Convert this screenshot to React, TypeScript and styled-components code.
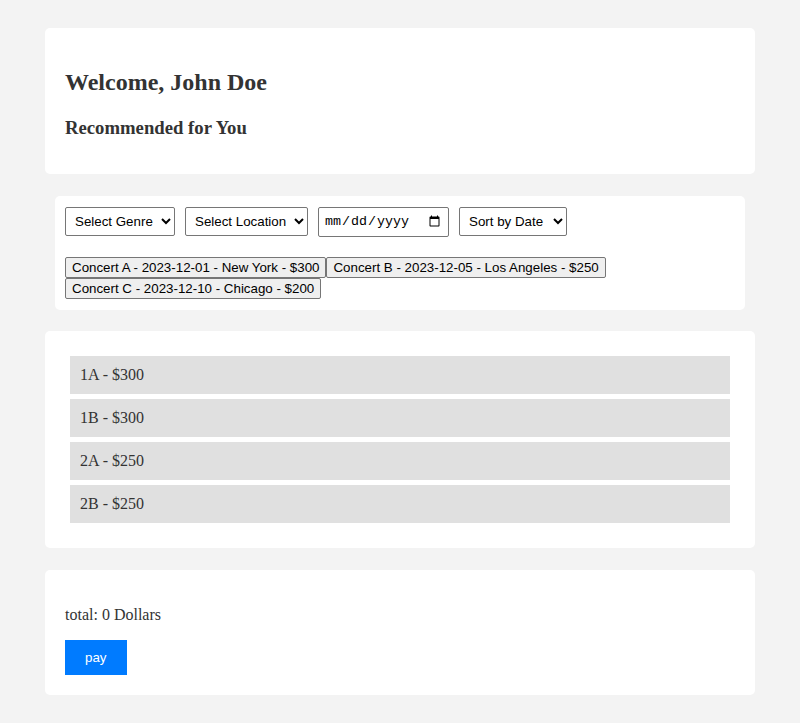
import React from "react";
import styled, { createGlobalStyle } from "styled-components";

const Global = createGlobalStyle`
  html, body { margin: 0; padding: 0; background: #f3f3f3; }
  body { font-family: "Liberation Serif", "Times New Roman", serif; color: #333; }
`;

const Page = styled.div`
  display: flex;
  flex-direction: column;
  gap: 21.5px;
  padding: 28px 45px 28px 45px;
`;

const Card = styled.section<{ $inset?: boolean }>`
  background: #fff;
  border-radius: 5px;
  padding: ${(p) => (p.$inset ? "11px 10px 11px" : "20px")};
  margin: 0 ${(p) => (p.$inset ? 10 : 0)}px;
  display: flow-root;
`;

const Title = styled.h1`
  font-size: 24px;
  margin: 21px 0 21px;
`;

const Subtitle = styled.h2`
  font-size: 18.72px;
  margin: 21px 0 15px;
`;

const Filters = styled.div`
  display: flex;
  gap: 10px;
  margin-bottom: 20px;
`;

const Select = styled.select<{ $w: number }>`
  width: ${(p) => p.$w}px;
  font-family: "Liberation Sans", Arial, sans-serif;
  font-size: 13.33px;
  padding: 5px;
  height: 29px;
  border: 1px solid #767676;
  border-radius: 2px;
  background: #fff;
  color: #000;
`;

const DateInput = styled.input`
  font-family: "Liberation Mono", monospace;
  font-size: 13.33px;
  padding: 5px;
  height: 30px;
  box-sizing: border-box;
  width: 131px;
  border: 1px solid #767676;
  border-radius: 2px;
`;

const ConcertList = styled.div`
  display: flex;
  flex-wrap: wrap;
  max-width: 560px;
`;

const ConcertButton = styled.button`
  font-family: "Liberation Sans", Arial, sans-serif;
  font-size: 13.33px;
  padding: 1px 6px;
  border: 1px solid #767676;
  border-radius: 2px;
  background: #efefef;
  color: #000;
  height: 21px;
`;

const Seat = styled.div`
  background: #e0e0e0;
  padding: 10px;
  margin: 5px;
  font-size: 16px;
`;

const Total = styled.p`
  font-size: 16px;
  margin: 16px 0;
`;

const PayButton = styled.button`
  background: #007bff;
  color: #fff;
  border: none;
  padding: 10px 20px;
  font-family: "Liberation Sans", Arial, sans-serif;
  font-size: 13.33px;
  height: 35px;
  align-self: flex-start;
`;

const concerts = [
  "Concert A - 2023-12-01 - New York - $300",
  "Concert B - 2023-12-05 - Los Angeles - $250",
  "Concert C - 2023-12-10 - Chicago - $200",
];

const seats = ["1A - $300", "1B - $300", "2A - $250", "2B - $250"];

export default function App() {
  return (
    <>
      <Global />
      <Page>
        <Card>
          <Title>Welcome, John Doe</Title>
          <Subtitle>Recommended for You</Subtitle>
        </Card>
        <Card $inset>
          <Filters>
            <Select $w={110}>
              <option>Select Genre</option>
            </Select>
            <Select $w={123}>
              <option>Select Location</option>
            </Select>
            <DateInput type="date" />
            <Select $w={108}>
              <option>Sort by Date</option>
            </Select>
          </Filters>
          <ConcertList>
            {concerts.map((c) => (
              <ConcertButton key={c}>{c}</ConcertButton>
            ))}
          </ConcertList>
        </Card>
        <Card>
          {seats.map((s) => (
            <Seat key={s}>{s}</Seat>
          ))}
        </Card>
        <Card>
          <Total>total: 0 Dollars</Total>
          <PayButton>pay</PayButton>
        </Card>
      </Page>
    </>
  );
}
